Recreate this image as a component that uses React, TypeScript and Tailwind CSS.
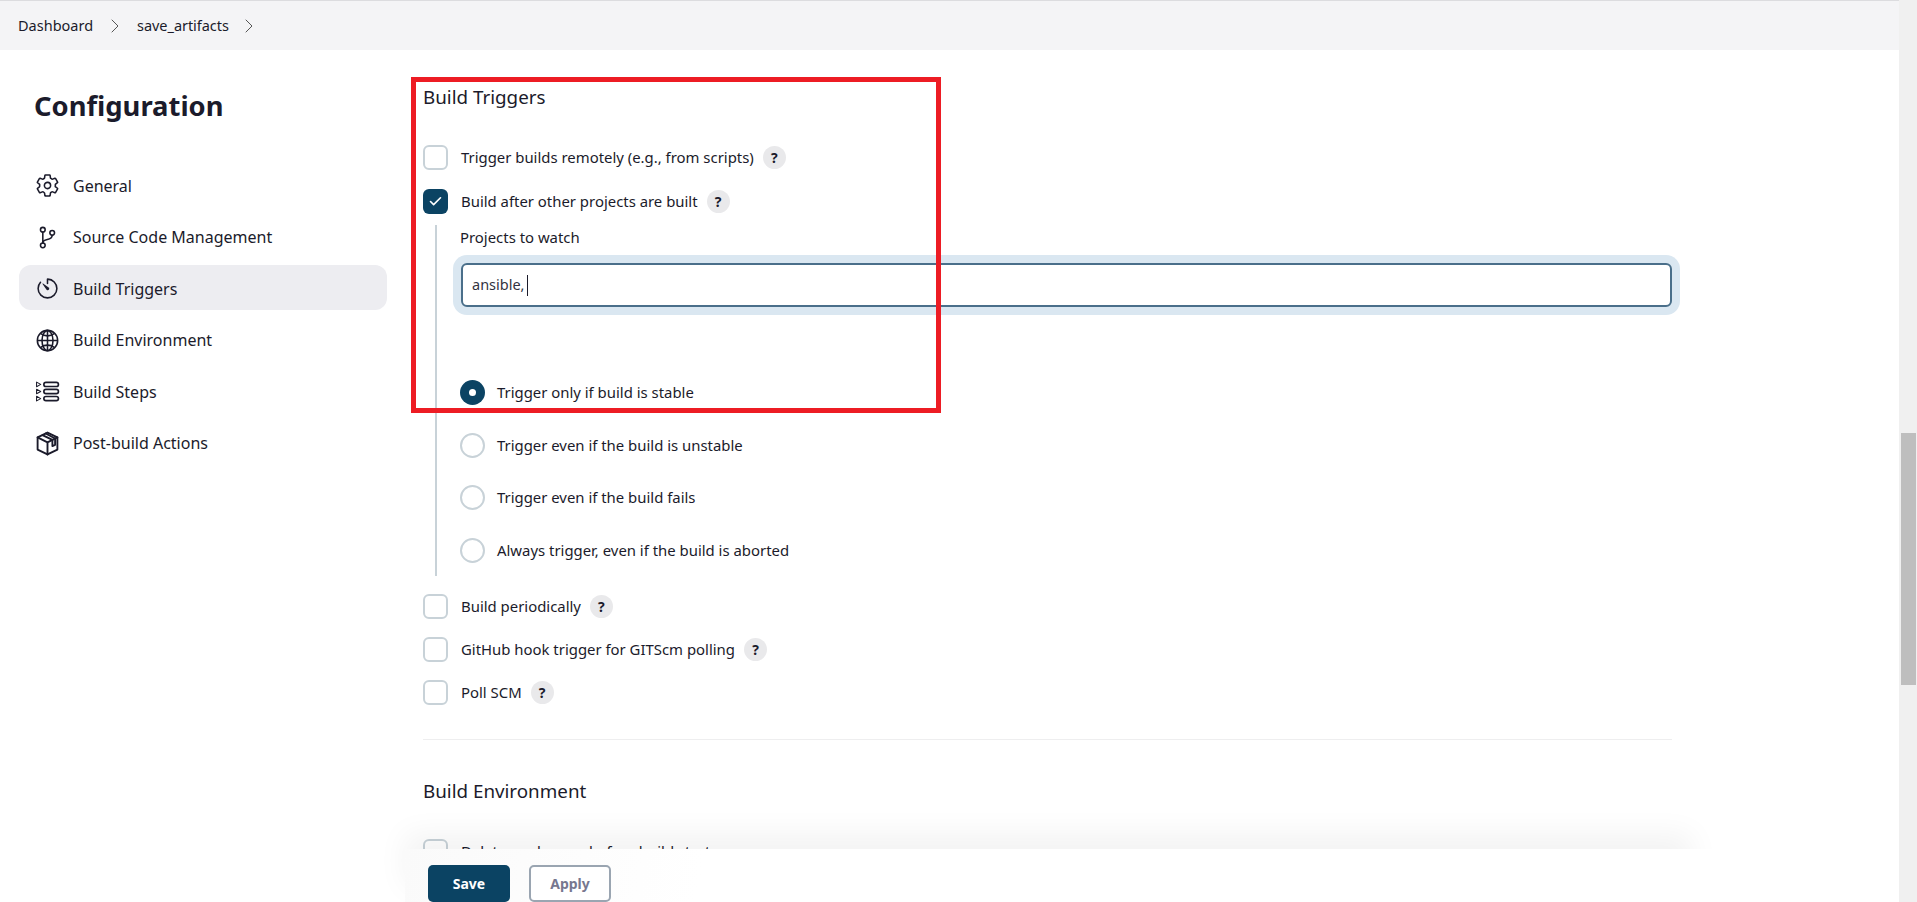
import React from "react";
import { IoSettingsOutline, IoGitBranchOutline, IoTimerOutline, IoGlobeOutline } from "react-icons/io5";
import { Check, ChevronRight } from "lucide-react";

const navItems = [
    { label: "General", icon: <IoSettingsOutline /> },
    { label: "Source Code Management", icon: <IoGitBranchOutline /> },
    { label: "Build Triggers", icon: <IoTimerOutline />, active: true },
    { label: "Build Environment", icon: <IoGlobeOutline /> },
    { label: "Build Steps", icon: <StepsIcon /> },
    { label: "Post-build Actions", icon: <PackageIcon /> },
];

function StepsIcon() {
    return (
        <svg viewBox="0 0 24 24" width="1em" height="1em" fill="none" stroke="currentColor" strokeWidth="1.6">
            <rect x="8.5" y="3.2" width="14" height="4" rx="2" />
            <rect x="8.5" y="10" width="14" height="4" rx="2" />
            <rect x="8.5" y="16.8" width="14" height="4" rx="2" />
            <path d="M1.5 3 5.5 5.2 1.5 7.4zM1.5 9.8 5.5 12 1.5 14.2zM1.5 16.6 5.5 18.8 1.5 21z" strokeWidth="1" strokeLinejoin="round" />
        </svg>
    );
}

function PackageIcon() {
    return (
        <svg viewBox="0 0 24 24" width="1em" height="1em" fill="none" stroke="currentColor" strokeWidth="1.8" strokeLinejoin="round" strokeLinecap="round">
            <path d="M12 1.5 21.5 6.2V17.8L12 22.5 2.5 17.8V6.2z" />
            <path d="M2.5 6.2 12 11 21.5 6.2M12 11V22.5" />
            <path d="M7.2 3.9 16.7 8.6V14.5M10.2 2.4 19.3 7.2V13.3M16.7 14.5 19.3 13.3" />
        </svg>
    );
}

function Help() {
    return (
        <span className="flex h-[23px] w-[23px] items-center justify-center rounded-full bg-[#e9e9eb] text-[14px] font-bold text-[#1b1b2b]">
            ?
        </span>
    );
}

function CheckRow({ label, checked }: { label: string; checked?: boolean }) {
    return (
        <div className="flex h-[25px] items-center">
            {checked ? (
                <span className="flex h-[25px] w-[25px] items-center justify-center rounded-[6px] bg-[#0b4363] text-white">
                    <Check size={15} strokeWidth={2.6} />
                </span>
            ) : (
                <span className="h-[25px] w-[25px] rounded-[6px] border-2 border-[#c8d2d8] bg-white"></span>
            )}
            <span className="ml-[13px] mr-[9px]">{label}</span>
            <Help />
        </div>
    );
}

function RadioRow({ label, checked }: { label: string; checked?: boolean }) {
    return (
        <div className="flex h-[25px] items-center">
            {checked ? (
                <span className="flex h-[25px] w-[25px] items-center justify-center rounded-full bg-[#0b4363]">
                    <span className="h-[7px] w-[7px] rounded-full bg-white"></span>
                </span>
            ) : (
                <span className="h-[25px] w-[25px] rounded-full border-2 border-[#c8d2d8] bg-white"></span>
            )}
            <span className="ml-[12px]">{label}</span>
        </div>
    );
}

export default function App() {
    return (
        <div className="relative flex h-[902px] w-[1917px] overflow-hidden bg-white text-[14.9px] text-[#1b1b2b] font-['Noto_Sans',sans-serif]">
            <div className="flex min-w-0 flex-1 flex-col">
                <div className="flex h-[50px] shrink-0 items-center border-t border-[#dcdcdf] bg-[#f4f4f6] pl-[18px] text-[14.5px]">
                    <span>Dashboard</span>
                    <ChevronRight size={24} strokeWidth={1} className="ml-[10px] mr-[10px] text-[#555]" />
                    <span className="tracking-[-0.05px]">save_artifacts</span>
                    <ChevronRight size={24} strokeWidth={1} className="ml-[8px] text-[#555]" />
                </div>

                <div className="flex min-h-0 flex-1">
                    <aside className="w-[423px] shrink-0 pl-[19px]">
                        <h1 className="mt-[36px] ml-[15px] text-[27.4px] leading-[40px] font-bold">Configuration</h1>
                        <nav className="mt-[36px] flex w-[368px] flex-col gap-[6.5px]">
                            {navItems.map((item) => (
                                <div
                                    key={item.label}
                                    className={`flex h-[45px] items-center rounded-[12px] pt-[2px] pl-[16px] text-[16px] ${item.active ? "bg-[#ededf1]" : ""}`}
                                >
                                    <span className="flex w-[38px] text-[25px]">{item.icon}</span>
                                    {item.label}
                                </div>
                            ))}
                        </nav>
                    </aside>

                    <main className="w-[1249px] pt-[31px]">
                        <h2 className="text-[18.8px] leading-[32px]">Build Triggers</h2>
                        <div className="mt-[32px] flex flex-col gap-[19px]">
                            <CheckRow label="Trigger builds remotely (e.g., from scripts)" />
                            <CheckRow label="Build after other projects are built" checked />
                        </div>

                        <div className="mt-[11px] ml-[12px] h-[351px] border-l-2 border-[#c8d2d8] pl-[23px]">
                            <div className="leading-[24px]">Projects to watch</div>
                            <div className="mt-[6px] -ml-[7px] h-[60px] w-[1227px] rounded-[14px] bg-[#dae7f1] p-[8px]">
                                <div className="flex h-[44px] items-center rounded-[6px] border-2 border-[#4a6f8a] bg-white pl-[9px] text-[14.5px] text-[#33333f]">
                                    ansible,
                                    <span className="ml-[2px] h-[21px] w-px bg-[#1b1b2b]"></span>
                                </div>
                            </div>
                            <div className="mt-[65px] flex flex-col gap-[27.5px]">
                                <RadioRow label="Trigger only if build is stable" checked />
                                <RadioRow label="Trigger even if the build is unstable" />
                                <RadioRow label="Trigger even if the build fails" />
                                <RadioRow label="Always trigger, even if the build is aborted" />
                            </div>
                        </div>

                        <div className="mt-[18px] flex flex-col gap-[18px]">
                            <CheckRow label="Build periodically" />
                            <CheckRow label="GitHub hook trigger for GITScm polling" />
                            <CheckRow label="Poll SCM" />
                        </div>

                        <hr className="mt-[34px] border-[#eeeeef]" />
                        <h2 className="mt-[35px] text-[18.8px] leading-[32px]">Build Environment</h2>
                        <div className="mt-[32px] flex h-[25px] items-center">
                            <span className="h-[25px] w-[25px] rounded-[6px] border-2 border-[#c8d2d8] bg-white"></span>
                            <span className="ml-[13px]">Delete workspace before build starts</span>
                        </div>
                    </main>
                </div>
            </div>

            <div className="relative w-[18px] shrink-0 bg-[#f0f0f0]">
                <div className="absolute top-[433px] left-[2px] h-[252px] w-[15px] bg-[#bebebe]"></div>
            </div>

            {/* sticky save bar, sits over the form; the shadow layer is separate so the bar can cover its lower part */}
            <div className="absolute top-[849px] left-[405px] h-[53px] w-[1287px] shadow-[0_-15px_30px_rgba(0,0,0,0.05)]"></div>
            <div className="absolute top-[849px] left-[405px] h-[53px] w-[1494px] bg-[linear-gradient(100deg,#fafafa,#ffffff_20%)] pt-[16px] pl-[23px]">
                <div className="flex gap-[19px] text-[14px] font-bold">
                    <button className="h-[37px] w-[82px] rounded-[5px] bg-[#0b4363] text-white">Save</button>
                    <button className="h-[37px] w-[82px] rounded-[5px] border-2 border-[#9aa5b1] bg-white text-[#77778f]">Apply</button>
                </div>
            </div>

            <div className="pointer-events-none absolute top-[77px] left-[411px] h-[336px] w-[530px] border-[5px] border-[#ed1c24]"></div>
        </div>
    );
}
